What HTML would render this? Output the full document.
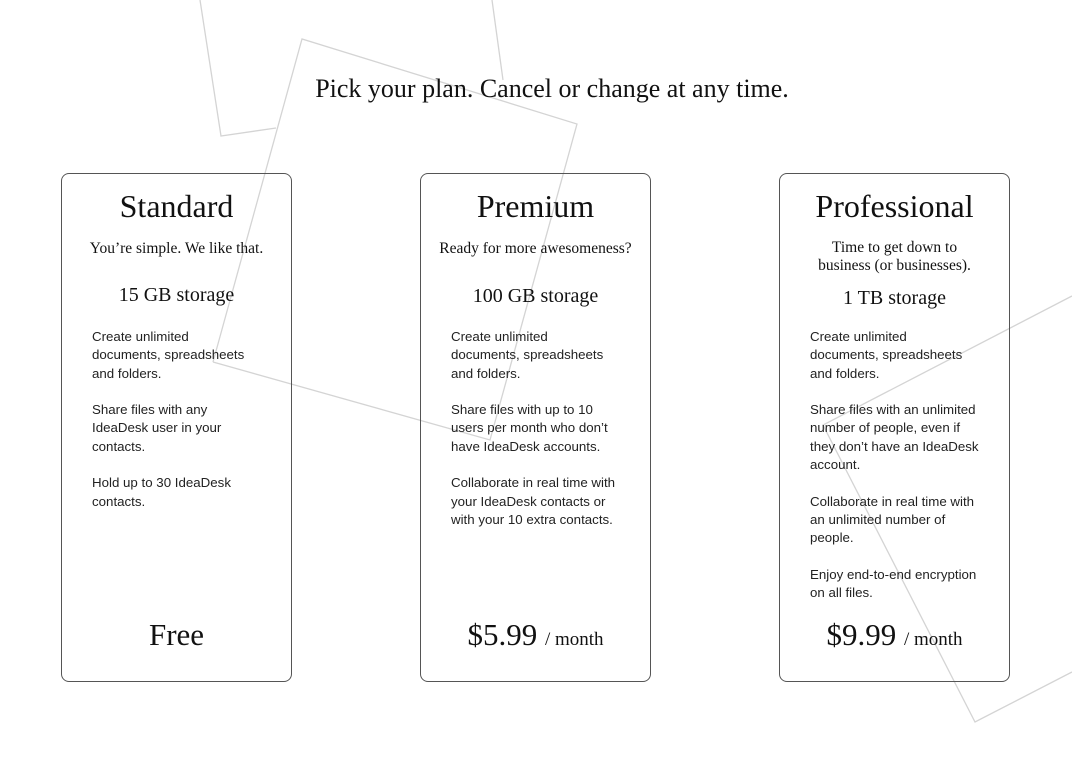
<!DOCTYPE html>
<html><head><meta charset="utf-8"><style>
*{margin:0;padding:0;box-sizing:border-box}
body{width:1072px;height:772px;background:#fff;position:relative;overflow:hidden;font-family:"Liberation Serif",serif;color:#111}
svg{position:absolute;left:0;top:0}
h1{position:absolute;left:0;width:1104px;text-align:center;top:74px;font-weight:normal;font-size:26px}
.card{position:absolute;top:173px;width:231px;height:509px;border:1px solid #555;border-radius:8px}
.c{position:absolute;left:0;width:100%;text-align:center;white-space:nowrap}
.name{top:14px;font-size:32px}
.sub{font-size:15.5px;line-height:18px}
.st{font-size:20px}
.body{position:absolute;left:30px;top:154px;font-family:"Liberation Sans",sans-serif;font-size:13.3px;line-height:18.3px;color:#222;white-space:nowrap}
.body p{margin-bottom:18.3px}
.price{font-size:31px}
.price small{font-size:19px}
</style></head><body>
<svg width="1072" height="772">
<g stroke="#d4d4d4" stroke-width="1.3" fill="none">
<polyline points="200,0 221,136 276,128"/>
<line x1="492" y1="0" x2="503" y2="80"/>
<polyline points="213,362 302,39 577,124 490,440 213,362"/>
<polyline points="1072,296 823,425 975,722 1072,672"/>
</g>
</svg>
<h1>Pick your plan. Cancel or change at any time.</h1>

<div class="card" style="left:61px">
<div class="c name">Standard</div>
<div class="c sub" style="top:66px">You’re simple. We like that.</div>
<div class="c st" style="top:110px">15 GB storage</div>
<div class="body"><p>Create unlimited<br>documents, spreadsheets<br>and folders.</p><p>Share files with any<br>IdeaDesk user in your<br>contacts.</p><p>Hold up to 30 IdeaDesk<br>contacts.</p></div>
<div class="c price" style="top:443px">Free</div>
</div>

<div class="card" style="left:420px">
<div class="c name">Premium</div>
<div class="c sub" style="top:66px">Ready for more awesomeness?</div>
<div class="c st" style="top:111px">100 GB storage</div>
<div class="body"><p>Create unlimited<br>documents, spreadsheets<br>and folders.</p><p>Share files with up to 10<br>users per month who don’t<br>have IdeaDesk accounts.</p><p>Collaborate in real time with<br>your IdeaDesk contacts or<br>with your 10 extra contacts.</p></div>
<div class="c price" style="top:443px">$5.99 <small>/ month</small></div>
</div>

<div class="card" style="left:779px">
<div class="c name">Professional</div>
<div class="c sub" style="top:65px">Time to get down to<br>business (or businesses).</div>
<div class="c st" style="top:113px">1 TB storage</div>
<div class="body"><p>Create unlimited<br>documents, spreadsheets<br>and folders.</p><p>Share files with an unlimited<br>number of people, even if<br>they don’t have an IdeaDesk<br>account.</p><p>Collaborate in real time with<br>an unlimited number of<br>people.</p><p>Enjoy end-to-end encryption<br>on all files.</p></div>
<div class="c price" style="top:443px">$9.99 <small>/ month</small></div>
</div>
</body></html>
